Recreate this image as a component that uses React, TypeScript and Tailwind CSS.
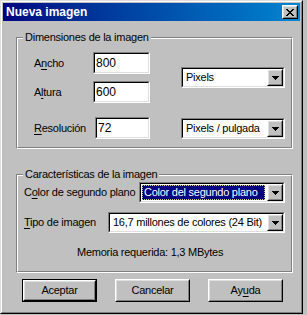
import React from "react";

const X_ROWS = [
  "11....11",
  ".11..11.",
  "..1111..",
  "...11...",
  "..1111..",
  ".11..11.",
  "11....11",
];

function Bitmap({ rows }: { rows: string[] }) {
  const w = rows[0].length;
  const h = rows.length;
  const rects: React.ReactNode[] = [];
  rows.forEach((r, y) =>
    r.split("").forEach((c, x) => {
      if (c === "1") rects.push(<rect key={`${x}-${y}`} x={x} y={y} width={1} height={1} />);
    })
  );
  return (
    <svg width={w} height={h} viewBox={`0 0 ${w} ${h}`} shapeRendering="crispEdges" fill="black">
      {rects}
    </svg>
  );
}

const ARROW_ROWS = ["1111111", ".11111.", "..111..", "...1..."];

function Raised({ className = "", children }: { className?: string; children?: React.ReactNode }) {
  return (
    <div className={`border border-t-white border-l-white border-r-black border-b-black bg-[#c0c0c0] ${className}`}>
      <div className="w-full h-full border border-t-[#dfdfdf] border-l-[#dfdfdf] border-r-[#808080] border-b-[#808080] flex items-center justify-center">
        {children}
      </div>
    </div>
  );
}

function Sunken({ className = "", children }: { className?: string; children?: React.ReactNode }) {
  return (
    <div className={`shrink-0 border border-t-[#808080] border-l-[#808080] border-r-white border-b-white ${className}`}>
      <div className="w-full h-full border border-t-black border-l-black border-r-[#dfdfdf] border-b-[#dfdfdf] bg-white flex items-center">
        {children}
      </div>
    </div>
  );
}

function Input({ value, className = "" }: { value: string; className?: string }) {
  return (
    <Sunken className={`h-[22px] ${className}`}>
      <span className="pl-[1px] text-[12px] leading-none tracking-normal">{value}</span>
    </Sunken>
  );
}

function Select({ value, className = "", focused = false }: { value: string; className?: string; focused?: boolean }) {
  return (
    <Sunken className={`h-[21px] ${className}`}>
      <div className="flex-1 min-w-0 h-full flex items-center p-[1px] overflow-hidden">
        {focused ? (
          <div className="h-full flex-1 min-w-0 mr-[1px] bg-[#000080] text-white border border-dotted border-[#c8c8a0] flex items-center pl-[1px] whitespace-nowrap overflow-hidden">
            {value}
          </div>
        ) : (
          <span className="pl-[2px] whitespace-nowrap">{value}</span>
        )}
      </div>
      <Raised className="w-[16px] h-full shrink-0">
        <Bitmap rows={ARROW_ROWS} />
      </Raised>
    </Sunken>
  );
}

function Group({ label, className = "", children }: { label: string; className?: string; children?: React.ReactNode }) {
  return (
    <div className={`relative border border-t-[#808080] border-l-[#808080] border-r-white border-b-white ${className}`}>
      <div className="w-full h-full border border-t-white border-l-white border-r-[#808080] border-b-[#808080]">
        {children}
      </div>
      <div className="absolute top-[-7px] left-[6px] px-[2px] bg-[#c0c0c0] leading-[13px] whitespace-nowrap">{label}</div>
    </div>
  );
}

function U({ children }: { children: React.ReactNode }) {
  return <span className="underline underline-offset-[2px]">{children}</span>;
}

function Button({ children, isDefault = false }: { children: React.ReactNode; isDefault?: boolean }) {
  if (isDefault) {
    return (
      <div className="w-[75px] h-[23px] border border-black">
        <Raised className="w-full h-full">{children}</Raised>
      </div>
    );
  }
  return <Raised className="w-[75px] h-[23px]">{children}</Raised>;
}

export default function App() {
  return (
    <div className="w-[307px] h-[315px] bg-[#c0c0c0] text-black text-[11px] leading-[13px] tracking-[-0.25px] font-['Liberation_Sans',Arial,sans-serif]">
      <div className="w-[303px] h-[314px] border border-t-[#dfdfdf] border-l-[#dfdfdf] border-r-black border-b-black">
        <div className="w-full h-full border border-t-white border-l-white border-r-[#808080] border-b-[#808080] p-[1px] flex flex-col">
          {/* Title bar */}
          <div className="h-[18px] shrink-0 bg-linear-to-r from-[#000080] to-[#1084d0] flex items-center justify-between pl-[3px] pr-[2px]">
            <span className="text-white font-bold text-[12px] leading-none tracking-normal">Nueva imagen</span>
            <Raised className="w-[16px] h-[14px]">
              <Bitmap rows={X_ROWS} />
            </Raised>
          </div>

          {/* Group 1 */}
          <Group label="Dimensiones de la imagen" className="ml-[13px] mt-[16px] w-[277px] h-[112px] shrink-0">
            <div className="flex pt-[13px] pl-[16px]">
              <div className="flex flex-col">
                <div className="flex items-center h-[22px]">
                  <span className="w-[59px] shrink-0 whitespace-nowrap">A<U>n</U>cho</span>
                  <Input value="800" className="w-[57px]" />
                </div>
                <div className="flex items-center h-[22px] mt-[7px]">
                  <span className="w-[59px] shrink-0 whitespace-nowrap">A<U>l</U>tura</span>
                  <Input value="600" className="w-[57px]" />
                </div>
                <div className="flex items-center h-[22px] mt-[14px]">
                  <span className="w-[61px] shrink-0 whitespace-nowrap"><U>R</U>esolución</span>
                  <Input value="72" className="w-[55px]" />
                </div>
              </div>
              <div className="flex flex-col ml-[31px] mt-[15px]">
                <Select value="Pixels" className="w-[104px]" />
                <Select value="Pixels / pulgada" className="w-[104px] mt-[30px]" />
              </div>
            </div>
          </Group>

          {/* Group 2 */}
          <Group label="Características de la imagen" className="ml-[13px] mt-[25px] w-[277px] h-[99px] shrink-0">
            <div className="flex flex-col pt-[6px] pl-[6px]">
              <div className="flex items-center">
                <span className="w-[115px] shrink-0 whitespace-nowrap">C<U>o</U>lor de segundo plano</span>
                <Select value="Color del segundo plano" focused className="w-[146px]" />
              </div>
              <div className="flex items-center mt-[9px]">
                <span className="w-[84px] shrink-0 whitespace-nowrap"><U>T</U>ipo de imagen</span>
                <Select value="16,7 millones de colores (24 Bit)" className="w-[177px]" />
              </div>
              <div className="mt-[13px] pl-[53px] whitespace-nowrap">Memoria requerida: 1,3 MBytes</div>
            </div>
          </Group>

          {/* Buttons */}
          <div className="flex gap-[18px] ml-[19px] mt-[6px]">
            <Button isDefault>Aceptar</Button>
            <Button>Cancelar</Button>
            <Button>Ay<U>u</U>da</Button>
          </div>
        </div>
      </div>
    </div>
  );
}
